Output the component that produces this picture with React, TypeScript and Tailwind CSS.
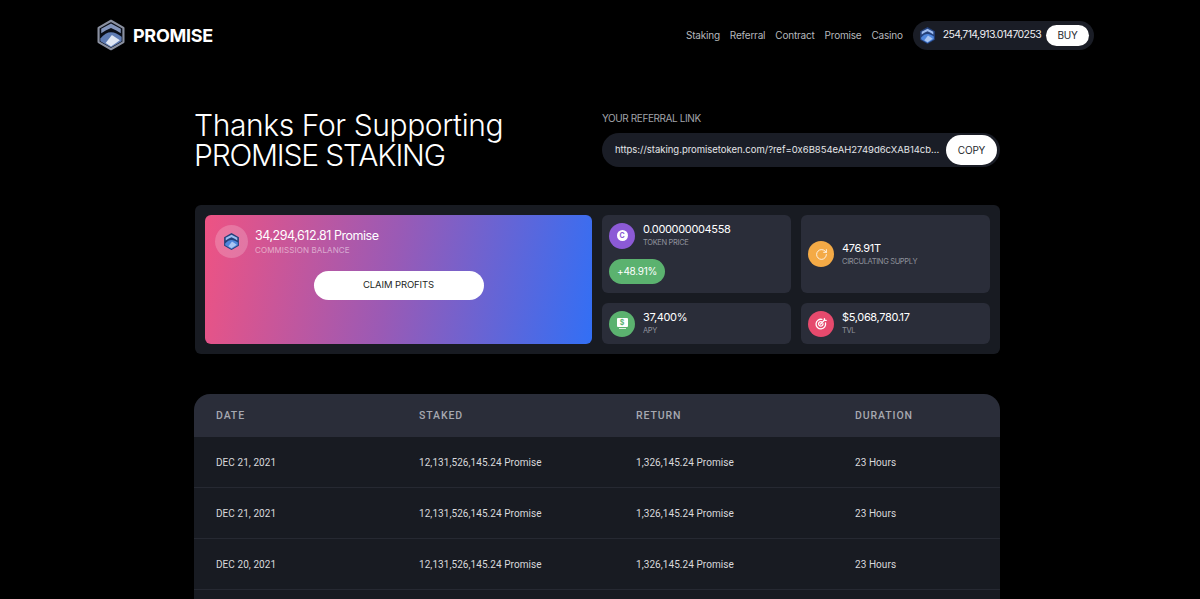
import { RotateCw } from "lucide-react";

const ui = "font-['Inter',sans-serif]";

const rows = [
  { date: "DEC 21, 2021" },
  { date: "DEC 21, 2021" },
  { date: "DEC 20, 2021" },
];

function Logo({ size, outline }: { size: number; outline?: boolean }) {
  return (
    <svg width={size} height={size} viewBox="0 0 36 36" aria-hidden="true">
      <path
        d="M18 2 L32 10 V26 L18 34 L4 26 V10 Z"
        fill={outline ? "#0a0e18" : "#23407a"}
        stroke={outline ? "#8a90a0" : "none"}
        strokeWidth="2.4"
        strokeLinejoin="round"
      />
      <path d="M7 11 L18 5 L29 11 V16 L24 13 L18 10 L12 13 L7 16 Z" fill={outline ? "#8294bb" : "#9dbcf0"} />
      <path d="M6 22 C10 17 14 15 18 15 C22 15 26 17 30 20 V25 L18 32 L6 25 Z" fill={outline ? "#5f7cb4" : "#4f86dc"} />
      <path d="M12 27 L19 18 L28 24 L18 31 Z" fill={outline ? "#dfe6f3" : "#a9c5f2"} />
    </svg>
  );
}

function Stat({ icon, color, value, label }: { icon: React.ReactNode; color: string; value: string; label: string }) {
  return (
    <div className="flex items-center gap-2">
      <div className={`w-[26px] h-[26px] rounded-full flex items-center justify-center shrink-0 ${color}`}>{icon}</div>
      <div>
        <p className="text-[11px] leading-[14px] text-white tracking-[-0.35px]">{value}</p>
        <p className="text-[7.5px] leading-[12px] mt-[1px] tracking-[-0.35px] text-[#8f929c]">{label}</p>
      </div>
    </div>
  );
}

export default function App() {
  return (
    <div className={`bg-black h-[599px] overflow-hidden text-white ${ui}`}>
      {/* Header */}
      <header className="flex items-center justify-between pl-[95px] pr-[106px] pt-[19px] h-[51px]">
        <div className="flex items-center gap-[6px]">
          <Logo size={32} outline />
          <span className="text-[18px] font-bold tracking-[-0.3px]">PROMISE</span>
        </div>
        <div className="flex items-center">
          <nav className="flex gap-[10px] text-[10px] tracking-[-0.2px] text-[#b6b8bd] mr-[10px]">
            <span>Staking</span>
            <span>Referral</span>
            <span>Contract</span>
            <span>Promise</span>
            <span>Casino</span>
          </nav>
          <div className="flex items-center h-[29px] rounded-full bg-[#1a1d26] px-[5px]">
            <Logo size={19} />
            <span className="ml-[6px] text-[10.5px] tracking-[-0.63px] text-[#f0f0f2]">254,714,913.01470253</span>
            <button className="ml-[5px] w-[43px] h-[21px] rounded-full bg-white text-[#26282e] text-[10px] tracking-[-0.2px]">BUY</button>
          </div>
        </div>
      </header>

      <main className="w-[805px] ml-[195px]">
        {/* Hero */}
        <section className="flex pt-[39px]">
          <h1 className="w-[407px] -ml-[1px] mr-[1px] pt-[20px] text-[30px] leading-[30px] font-light tracking-[-0.4px]">
            Thanks For Supporting
            <br />
            <span className="tracking-[-1.2px]">PROMISE STAKING</span>
          </h1>
          <div className="w-[398px]">
            <p className="text-[10px] leading-[14px] mt-[21px] tracking-[-0.4px] text-[#a2a4aa]">YOUR REFERRAL LINK</p>
            <div className="flex items-center h-[34px] mt-[8px] rounded-full bg-[#1a1d26] pl-[13px] pr-[3px]">
              <span className="text-[9.5px] tracking-[-0.02px] text-[#e4e5e8] whitespace-nowrap">
                https://staking.promisetoken.com/?ref=0x6B854eAH2749d6cXAB14cb...
              </span>
              <button className="ml-auto w-[51px] h-[30px] rounded-full bg-white text-[#26282e] text-[10px] tracking-[-0.2px]">COPY</button>
            </div>
          </div>
        </section>

        {/* Stats panel */}
        <section className="flex gap-[10px] mt-[35px] p-[10px] h-[149px] rounded-[6px] bg-[#181b22]">
          <div className="w-[387px] rounded-[6px] bg-[linear-gradient(100deg,#ee5383_0%,#9a5ab5_48%,#326ff5_100%)] p-[10px]">
            <div className="flex items-center gap-[7px]">
              <div className="w-[33px] h-[33px] rounded-full bg-white/20 flex items-center justify-center">
                <Logo size={19} />
              </div>
              <div className="pt-[1px]">
                <p className="text-[12.5px] leading-[16px] tracking-[-0.46px]">34,294,612.81 Promise</p>
                <p className="text-[8px] leading-[12px] tracking-[0.1px] text-white/50">COMMISSION BALANCE</p>
              </div>
            </div>
            <button className="block mx-auto mt-[13px] w-[170px] h-[29px] rounded-full bg-white text-[#1d1f25] text-[9.5px] tracking-[-0.1px]">
              CLAIM PROFITS
            </button>
          </div>
          <div className="flex-1 grid grid-cols-2 grid-rows-[78px_41px] gap-[10px]">
            <div className="rounded-[6px] bg-[#2a2d39] px-[7px] pt-[7px]">
              <Stat
                color="bg-[#8c5ad6]"
                icon={
                  <span className="w-[11px] h-[11px] rounded-full bg-white text-[#8c5ad6] text-[7px] font-bold leading-[11px] text-center">C</span>
                }
                value="0.000000004558"
                label="TOKEN PRICE"
              />
              <div className="mt-[10px] w-[56px] h-[25px] rounded-full bg-[#5bb26f] flex items-center justify-center text-[10px] tracking-[-0.3px]">
                +48.91%
              </div>
            </div>
            <div className="rounded-[6px] bg-[#2a2d39] px-[7px] flex items-center">
              <Stat
                color="bg-[#f4aa46]"
                icon={<RotateCw size={13} strokeWidth={1.5} className="text-white" />}
                value="476.91T"
                label="CIRCULATING SUPPLY"
              />
            </div>
            <div className="rounded-[6px] bg-[#2a2d39] px-[7px] flex items-center">
              <Stat
                color="bg-[#5bb26f]"
                icon={
                  <span className="flex flex-col items-center gap-[1px]">
                    <span className="w-[11px] h-[9px] rounded-[1px] bg-white text-[#5bb26f] text-[7px] font-bold leading-[9px] text-center">$</span>
                    <span className="w-[7px] h-[1px] bg-white/80" />
                  </span>
                }
                value="37,400%"
                label="APY"
              />
            </div>
            <div className="rounded-[6px] bg-[#2a2d39] px-[7px] flex items-center">
              <Stat
                color="bg-[#e64a6d]"
                icon={
                  <svg width="14" height="14" viewBox="0 0 14 14" fill="none" stroke="white" strokeWidth="1.3" strokeLinecap="round">
                    <path d="M11.5 6a4.8 4.8 0 1 1-3.6-3.6" />
                    <path d="M9 6.6a2.2 2.2 0 1 1-1.7-1.9" />
                    <path d="M6.6 7 10.6 3" />
                    <path d="M10.4 1.6v1.8h1.8" />
                  </svg>
                }
                value="$5,068,780.17"
                label="TVL"
              />
            </div>
          </div>
        </section>

        {/* Stakes table */}
        <section className="mt-[40px] -ml-[1px] rounded-t-[16px] overflow-hidden font-['Roboto',sans-serif] text-[10px]">
          <div className="flex items-center h-[43px] bg-[#2a2d39] text-[#a6a8b0] text-[10.5px] font-medium tracking-[0.9px] pl-[22px]">
            <span className="w-[203px]">DATE</span>
            <span className="w-[217px]">STAKED</span>
            <span className="w-[219px]">RETURN</span>
            <span>DURATION</span>
          </div>
          {rows.map((row, i) => (
            <div key={i} className="flex items-center h-[51px] pt-[1px] bg-[#181b22] border-b border-[#262932] text-[#d8d9dc] tracking-[0.06px] pl-[22px]">
              <span className="w-[203px]">{row.date}</span>
              <span className="w-[217px]">12,131,526,145.24 Promise</span>
              <span className="w-[219px]">1,326,145.24 Promise</span>
              <span>23 Hours</span>
            </div>
          ))}
          <div className="h-[20px] bg-[#181b22]" />
        </section>
      </main>
    </div>
  );
}
